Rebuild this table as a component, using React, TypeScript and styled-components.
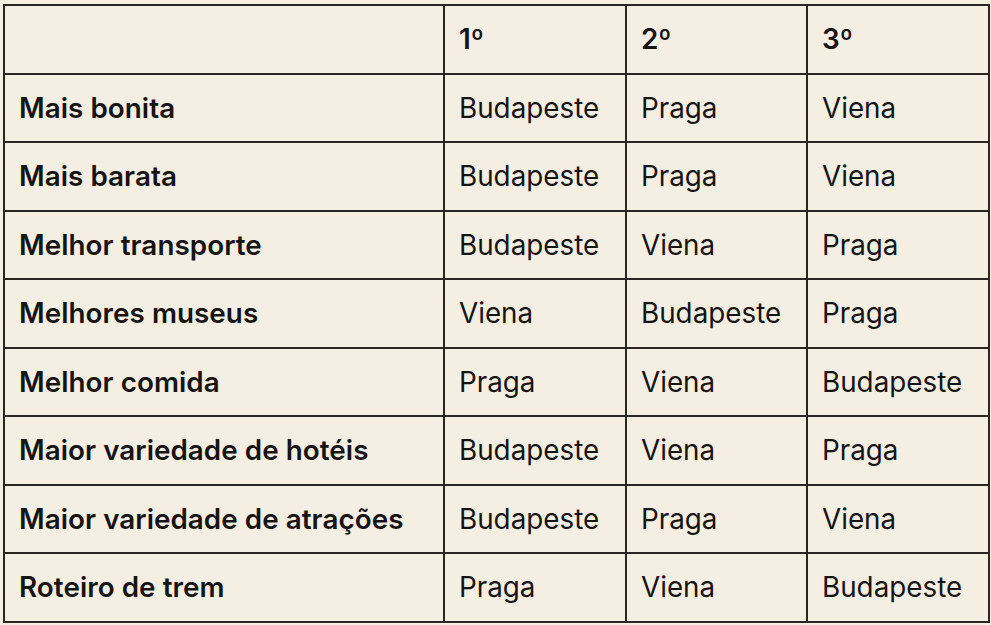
import React from "react";
import styled, { createGlobalStyle } from "styled-components";

const Global = createGlobalStyle`
  html, body { margin: 0; padding: 0; background: #f5efe3; }
  body { font-family: Inter, "Noto Sans", sans-serif; }
`;

const Page = styled.div`
  padding: 4px 3px 0 3px;
  width: 991px;
  height: 625px;
  box-sizing: border-box;
  background: #f5efe3;
`;

const Table = styled.table`
  border-collapse: collapse;
  width: 985px;
  table-layout: fixed;
  color: #161412;
`;

const Row = styled.tr`
  height: 68.5px;
`;

const Cell = styled.td<{ $bold?: boolean }>`
  border: 2px solid #2a2621;
  padding: 0 0 0 14px;
  font-size: 27.8px;
  font-weight: ${(p) => (p.$bold ? 600 : 400)};
  letter-spacing: ${(p) => (p.$bold ? "0.05px" : "0")};
  vertical-align: middle;
  white-space: nowrap;
`;

const Col = styled.col<{ $w: number }>`
  width: ${(p) => p.$w}px;
`;

const rows: [string, string, string, string][] = [
  ["Mais bonita", "Budapeste", "Praga", "Viena"],
  ["Mais barata", "Budapeste", "Praga", "Viena"],
  ["Melhor transporte", "Budapeste", "Viena", "Praga"],
  ["Melhores museus", "Viena", "Budapeste", "Praga"],
  ["Melhor comida", "Praga", "Viena", "Budapeste"],
  ["Maior variedade de hotéis", "Budapeste", "Viena", "Praga"],
  ["Maior variedade de atrações", "Budapeste", "Praga", "Viena"],
  ["Roteiro de trem", "Praga", "Viena", "Budapeste"],
];

export default function App() {
  return (
    <Page>
      <Global />
      <Table>
        <colgroup>
          <Col $w={440} />
          <Col $w={182} />
          <Col $w={181} />
          <Col $w={182} />
        </colgroup>
        <tbody>
          <Row>
            <Cell />
            <Cell $bold>1º</Cell>
            <Cell $bold>2º</Cell>
            <Cell $bold>3º</Cell>
          </Row>
          {rows.map((r) => (
            <Row key={r[0]}>
              <Cell $bold>{r[0]}</Cell>
              <Cell>{r[1]}</Cell>
              <Cell>{r[2]}</Cell>
              <Cell>{r[3]}</Cell>
            </Row>
          ))}
        </tbody>
      </Table>
    </Page>
  );
}
